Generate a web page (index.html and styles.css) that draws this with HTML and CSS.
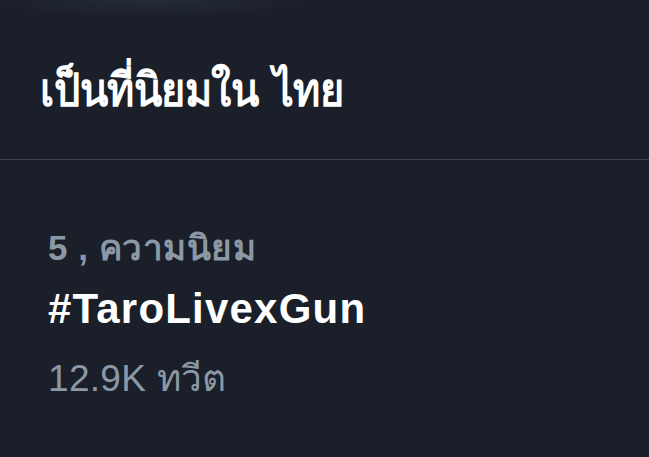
FILE: index.html
```html
<!DOCTYPE html>
<html lang="th">
<head>
<meta charset="utf-8">
<link rel="stylesheet" href="styles.css">
</head>
<body>
<div class="page">
  <header class="header">
    <h1 class="title">เป็นที่นิยมใน ไทย</h1>
  </header>
  <section class="trend">
    <div class="meta">5 , ความนิยม</div>
    <div class="tag">#TaroLivexGun</div>
    <div class="count">12.9K ทวีต</div>
  </section>
</div>
</body>
</html>
```
FILE: styles.css
```css
html, body {
  margin: 0;
  padding: 0;
  background: #1a1f29;
}
.page {
  width: 649px;
  height: 457px;
  overflow: hidden;
  background: radial-gradient(ellipse 160px 18px at 150px 0, rgba(60,68,80,0.35), rgba(60,68,80,0) 100%), #1a1f29;
  font-family: "Liberation Sans", Arial, sans-serif;
}
.header {
  height: 159px;
  border-bottom: 1px solid #3d434d;
  padding-left: 40px;
  display: flex;
  align-items: flex-start;
}
.title {
  margin: 0;
  padding-top: 60px;
  color: #ffffff;
  font-size: 46px;
  font-weight: 700;
  line-height: 60px;
  letter-spacing: -0.5px;
  word-spacing: 4px;
  transform-origin: left center;
  transform: scaleX(0.9);
}
.trend {
  padding: 68px 0 0 48px;
  display: flex;
  flex-direction: column;
}
.meta {
  color: #8b98a5;
  font-size: 35px;
  font-weight: 700;
  line-height: 40px;
  letter-spacing: 0.5px;
}
.tag {
  margin-top: 13px;
  color: #ffffff;
  font-size: 42px;
  font-weight: 700;
  line-height: 56px;
  letter-spacing: 1.2px;
}
.count {
  margin-top: 20px;
  color: #8b98a5;
  font-size: 37px;
  line-height: 44px;
  letter-spacing: 0.3px;
}
```
